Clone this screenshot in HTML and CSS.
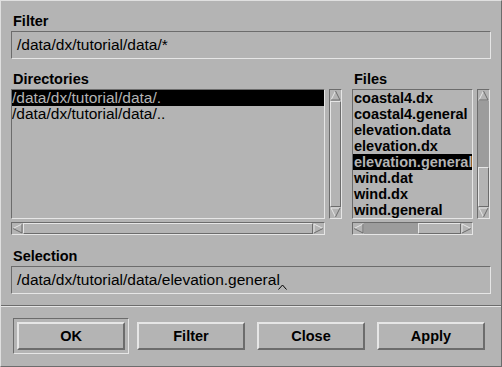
FILE: index.html
```html
<!DOCTYPE html>
<html>
<head>
<meta charset="utf-8">
<link rel="stylesheet" href="styles.css">
</head>
<body>
<div class="dialog">
  <div class="body">
    <div class="label">Filter</div>
    <div class="field">/data/dx/tutorial/data/*</div>
    <div class="lists">
      <div class="group dirs">
        <div class="label">Directories</div>
        <div class="list">
          <div class="item sel">/data/dx/tutorial/data/.</div>
          <div class="item">/data/dx/tutorial/data/..</div>
        </div>
        <div class="vscroll">
          <svg class="arrow" viewBox="0 0 11 11"><polygon points="5.5,1 1,10 10,10" fill="#b4b4b4"/><line x1="1" y1="10" x2="5.5" y2="1" stroke="#e6e6e6"/><polyline points="5.5,1 10,10 1,10" fill="none" stroke="#6c6c6c"/></svg>
          <div class="track"><div class="slider"></div></div>
          <svg class="arrow" viewBox="0 0 11 11"><polygon points="1,1 10,1 5.5,10" fill="#b4b4b4"/><polyline points="5.5,10 1,1 10,1" fill="none" stroke="#e6e6e6"/><line x1="10" y1="1" x2="5.5" y2="10" stroke="#6c6c6c"/></svg>
        </div>
        <div class="hscroll">
          <svg class="arrow" viewBox="0 0 11 11"><polygon points="1,5.5 10,1 10,10" fill="#b4b4b4"/><line x1="1" y1="5.5" x2="10" y2="1" stroke="#e6e6e6"/><polyline points="10,1 10,10 1,5.5" fill="none" stroke="#6c6c6c"/></svg>
          <div class="track"><div class="slider"></div></div>
          <svg class="arrow" viewBox="0 0 11 11"><polygon points="1,1 10,5.5 1,10" fill="#b4b4b4"/><polyline points="1,10 1,1 10,5.5" fill="none" stroke="#e6e6e6"/><line x1="10" y1="5.5" x2="1" y2="10" stroke="#6c6c6c"/></svg>
        </div>
      </div>
      <div class="group files">
        <div class="label">Files</div>
        <div class="list">
          <div class="item">coastal4.dx</div>
          <div class="item">coastal4.general</div>
          <div class="item">elevation.data</div>
          <div class="item">elevation.dx</div>
          <div class="item sel">elevation.general</div>
          <div class="item">wind.dat</div>
          <div class="item">wind.dx</div>
          <div class="item">wind.general</div>
        </div>
        <div class="vscroll">
          <svg class="arrow" viewBox="0 0 11 11"><polygon points="5.5,1 1,10 10,10" fill="#b4b4b4"/><line x1="1" y1="10" x2="5.5" y2="1" stroke="#e6e6e6"/><polyline points="5.5,1 10,10 1,10" fill="none" stroke="#6c6c6c"/></svg>
          <div class="track end"><div class="slider part-v"></div></div>
          <svg class="arrow" viewBox="0 0 11 11"><polygon points="1,1 10,1 5.5,10" fill="#b4b4b4"/><polyline points="5.5,10 1,1 10,1" fill="none" stroke="#e6e6e6"/><line x1="10" y1="1" x2="5.5" y2="10" stroke="#6c6c6c"/></svg>
        </div>
        <div class="hscroll">
          <svg class="arrow" viewBox="0 0 11 11"><polygon points="1,5.5 10,1 10,10" fill="#b4b4b4"/><line x1="1" y1="5.5" x2="10" y2="1" stroke="#e6e6e6"/><polyline points="10,1 10,10 1,5.5" fill="none" stroke="#6c6c6c"/></svg>
          <div class="track end"><div class="slider part-h"></div></div>
          <svg class="arrow" viewBox="0 0 11 11"><polygon points="1,1 10,5.5 1,10" fill="#b4b4b4"/><polyline points="1,10 1,1 10,5.5" fill="none" stroke="#e6e6e6"/><line x1="10" y1="5.5" x2="1" y2="10" stroke="#6c6c6c"/></svg>
        </div>
      </div>
    </div>
    <div class="label sel-label">Selection</div>
    <div class="field">/data/dx/tutorial/data/elevation.general<svg class="caret" viewBox="0 0 9 6"><polyline points="0.5,5.5 4.5,1 8.5,5.5" fill="none" stroke="#000"/></svg></div>
  </div>
  <div class="separator"></div>
  <div class="buttons">
    <div class="slot default"><div class="btn">OK</div></div>
    <div class="slot"><div class="btn">Filter</div></div>
    <div class="slot"><div class="btn">Close</div></div>
    <div class="slot"><div class="btn">Apply</div></div>
  </div>
</div>
</body>
</html>
```
FILE: styles.css
```css
body {
  margin: 0;
  background: #b4b4b4;
}
.dialog {
  width: 502px;
  height: 367px;
  box-sizing: border-box;
  border-top: 1px solid #e0e0e0;
  border-left: 1px solid #e0e0e0;
  border-right: 1px solid #6c6c6c;
  border-bottom: 1px solid #6c6c6c;
  font-family: "Liberation Sans", Arial, sans-serif;
  color: #000;
  background: #b4b4b4;
}
.body {
  padding: 11px 10px 11px 10px;
}
.label {
  font-weight: bold;
  font-size: 14.5px;
  line-height: 19px;
  height: 19px;
  padding-left: 2px;
  white-space: nowrap;
}
.field {
  height: 28px;
  box-sizing: border-box;
  border: 1px solid;
  border-color: #6c6c6c #e6e6e6 #e6e6e6 #6c6c6c;
  padding-left: 5px;
  font-size: 15.5px;
  line-height: 26px;
  white-space: nowrap;
}
.lists {
  display: flex;
  gap: 10px;
  margin-top: 11px;
}
.group {
  display: grid;
  grid-template-columns: 1fr 13px;
  grid-template-rows: 19px 130px auto;
  column-gap: 4px;
}
.dirs { width: 331px; }
.files { width: 138px; }
.group .label { grid-column: 1 / 3; }
.list {
  box-sizing: border-box;
  border: 1px solid;
  border-color: #6c6c6c #e6e6e6 #e6e6e6 #6c6c6c;
  overflow: hidden;
}
.item {
  font-size: 15.5px;
  line-height: 16px;
  height: 16px;
  white-space: nowrap;
}
.files .item {
  font-weight: bold;
  font-size: 14.5px;
  padding-left: 1px;
}
.sel {
  background: #000;
  color: #b4b4b4;
}
.vscroll, .hscroll {
  box-sizing: border-box;
  border: 1px solid;
  border-color: #6c6c6c #e6e6e6 #e6e6e6 #6c6c6c;
  display: flex;
}
.vscroll { flex-direction: column; }
.hscroll {
  grid-column: 1;
  margin-top: 3px;
  height: 13px;
}
.arrow {
  width: 11px;
  height: 11px;
  display: block;
  flex-shrink: 0;
}
.track {
  flex: 1;
  display: flex;
  background: #9c9c9c;
}
.vscroll .track { flex-direction: column; }
.track.end { justify-content: flex-end; }
.slider {
  flex: 1;
  box-sizing: border-box;
  border: 1px solid;
  border-color: #e6e6e6 #6c6c6c #6c6c6c #e6e6e6;
  background: #b4b4b4;
}
.slider.part-v { flex: 0 0 40px; }
.slider.part-h { flex: 0 0 43px; }
.sel-label { margin-top: 12px; }
.caret {
  width: 9px;
  height: 6px;
  vertical-align: -5px;
  margin-left: -2px;
}
.separator {
  border-top: 1px solid #6c6c6c;
  border-bottom: 1px solid #e6e6e6;
}
.buttons {
  display: flex;
  gap: 4px;
  padding: 11px 0 0 12px;
}
.slot {
  border: 1px solid transparent;
  padding: 3px;
}
.slot.default {
  border-color: #6c6c6c #e6e6e6 #e6e6e6 #6c6c6c;
}
.btn {
  width: 108px;
  height: 28px;
  box-sizing: border-box;
  border: 2px solid;
  border-color: #e6e6e6 #6c6c6c #6c6c6c #e6e6e6;
  font-weight: bold;
  font-size: 14.5px;
  display: flex;
  align-items: center;
  justify-content: center;
  background: #b4b4b4;
}
```
